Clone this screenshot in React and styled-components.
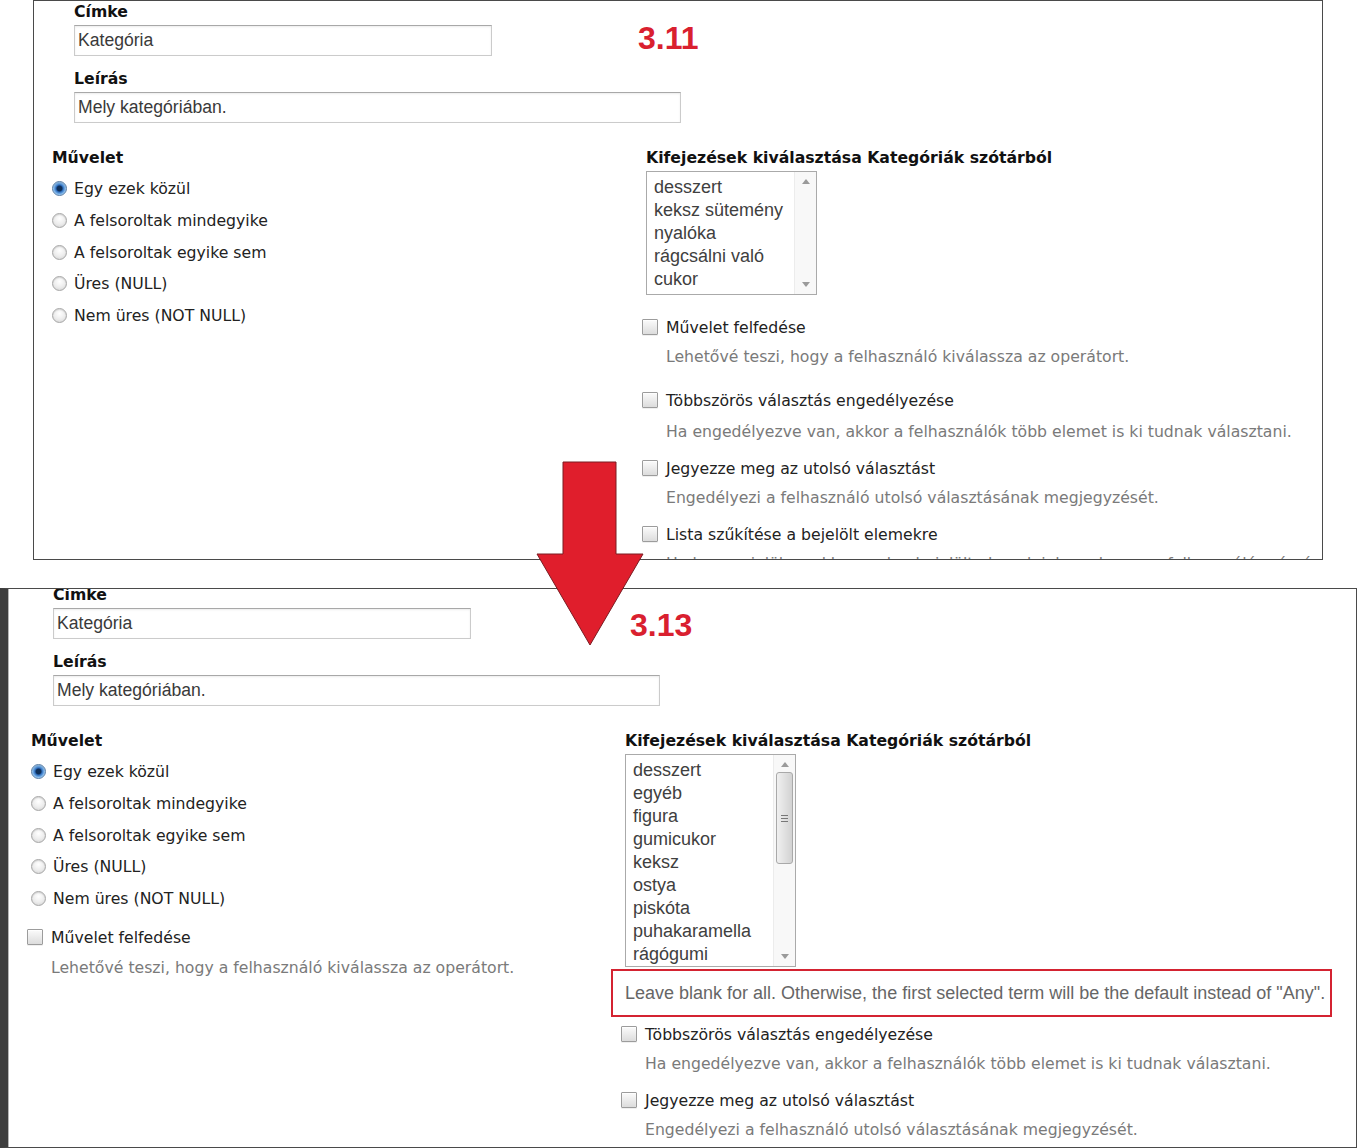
import React from 'react'
import styled, { createGlobalStyle } from 'styled-components'

const GlobalStyle = createGlobalStyle`
  html, body {
    margin: 0;
    padding: 0;
    background: #fff;
  }
  body {
    font-family: "DejaVu Sans", Verdana, sans-serif;
  }
`

const operators = [
    'Egy ezek közül',
    'A felsoroltak mindegyike',
    'A felsoroltak egyike sem',
    'Üres (NULL)',
    'Nem üres (NOT NULL)',
]

const oldTerms = ['desszert', 'keksz sütemény', 'nyalóka', 'rágcsálni való', 'cukor']
const newTerms = ['desszert', 'egyéb', 'figura', 'gumicukor', 'keksz', 'ostya', 'piskóta', 'puhakaramella', 'rágógumi']

const oldOptions = [
    { label: 'Művelet felfedése', hint: 'Lehetővé teszi, hogy a felhasználó kiválassza az operátort.', top: 22, hintTop: 10 },
    { label: 'Többszörös választás engedélyezése', hint: 'Ha engedélyezve van, akkor a felhasználók több elemet is ki tudnak választani.', top: 23, hintTop: 12 },
    { label: 'Jegyezze meg az utolsó választást', hint: 'Engedélyezi a felhasználó utolsó választásának megjegyzését.', top: 16, hintTop: 10 },
    { label: 'Lista szűkítése a bejelölt elemekre', hint: 'Ha be van jelölve, akkor csak a bejelölt elemek jelennek meg a felhasználó számára a listában.', top: 16, hintTop: 10 },
]

const newOptions = [
    { label: 'Többszörös választás engedélyezése', hint: 'Ha engedélyezve van, akkor a felhasználók több elemet is ki tudnak választani.', top: 7, hintTop: 10 },
    { label: 'Jegyezze meg az utolsó választást', hint: 'Engedélyezi a felhasználó utolsó választásának megjegyzését.', top: 16, hintTop: 10 },
]

const CheckOption = ({ label, hint, top, hintTop }) => (
    <>
        <CheckRow $top={top}>
            <Check />
            <span>{label}</span>
        </CheckRow>
        {hint && <Hint $top={hintTop}>{hint}</Hint>}
    </>
)

const TermList = ({ terms, height, thumb }) => (
    <ListBox $height={height}>
        <Options>
            {terms.map(t => <div key={t}>{t}</div>)}
        </Options>
        <ScrollBar>
            <ArrowUp />
            <Track>{thumb && <Thumb><Grip /></Thumb>}</Track>
            <ArrowDown />
        </ScrollBar>
    </ListBox>
)

const TextFields = () => (
    <Fields>
        <FieldLabel>Címke</FieldLabel>
        <TextBox $width={418}>Kategória</TextBox>
        <FieldLabel>Leírás</FieldLabel>
        <TextBox $width={607}>Mely kategóriában.</TextBox>
    </Fields>
)

const OperatorList = () => (
    <>
        <SectionTitle>Művelet</SectionTitle>
        <RadioList>
            {operators.map((op, i) => (
                <RadioRow key={op}>
                    <Radio $checked={i === 0} />
                    <span>{op}</span>
                </RadioRow>
            ))}
        </RadioList>
    </>
)

const App = () => {
    return (
        <Page>
            <GlobalStyle />

            <Panel $offset={33} $width={1290}>
                <Content $pl={18} $mt={1}>
                    <TextFields />
                    <Columns>
                        <div>
                            <OperatorList />
                        </div>
                        <div>
                            <SectionTitle>Kifejezések kiválasztása Kategóriák szótárból</SectionTitle>
                            <TermList terms={oldTerms} height={124} />
                            {oldOptions.map(o => <CheckOption key={o.label} {...o} />)}
                        </div>
                    </Columns>
                </Content>
                <FigureNo $left={604} $top={21}>3.11</FigureNo>
            </Panel>

            <Panel $offset={0} $width={1357} $dark>
                <Content $pl={23} $mt={-4}>
                    <TextFields />
                    <Columns>
                        <div>
                            <OperatorList />
                            <CheckOption label="Művelet felfedése" top={13} hintTop={11}
                                hint="Lehetővé teszi, hogy a felhasználó kiválassza az operátort." />
                        </div>
                        <div>
                            <SectionTitle>Kifejezések kiválasztása Kategóriák szótárból</SectionTitle>
                            <TermList terms={newTerms} height={213} thumb />
                            <Note>Leave blank for all. Otherwise, the first selected term will be the default instead of "Any".</Note>
                            {newOptions.map(o => <CheckOption key={o.label} {...o} />)}
                        </div>
                    </Columns>
                </Content>
                <FigureNo $left={622} $top={20}>3.13</FigureNo>
            </Panel>

            <DownArrow width="109" height="186" viewBox="0 0 109 186">
                <polygon points="27,1 80,1 80,93 107,93 54,184 1,93 27,93"
                    fill="#e01e2c" stroke="#7a1c22" strokeWidth="1" />
            </DownArrow>
        </Page>
    )
}

export default App;

const Page = styled.div`
    position: relative;
    width: 1357px;
    height: 1148px;
    overflow: hidden;
    display: flex;
    flex-direction: column;
    gap: 28px;
`

const Panel = styled.div`
    position: relative;
    box-sizing: border-box;
    height: 560px;
    width: ${p => p.$width}px;
    margin-left: ${p => p.$offset}px;
    border: 1px solid #4a4a4a;
    border-left: ${p => p.$dark ? '8px solid #3d3d3d' : '1px solid #4a4a4a'};
    box-shadow: ${p => p.$dark ? 'inset 1px 0 0 #b5b5b5' : 'none'};
    background: #fff;
    overflow: hidden;
`

const Content = styled.div`
    padding-left: ${p => p.$pl}px;
    margin-top: ${p => p.$mt}px;
`

const Fields = styled.div`
    padding-left: 22px;
`

const FieldLabel = styled.div`
    font-size: 15.7px;
    font-weight: bold;
    line-height: 20px;
    color: #111;
`

const TextBox = styled.div`
    box-sizing: border-box;
    width: ${p => p.$width}px;
    height: 31px;
    margin: 3px 0 13px;
    padding-left: 3px;
    display: flex;
    align-items: center;
    border: 1px solid #cbcbcb;
    border-top-color: #a8a8a8;
    box-shadow: inset 0 1px 2px rgba(0, 0, 0, 0.08);
    font-family: "Liberation Sans", Arial, sans-serif;
    font-size: 17.6px;
    color: #3a3a3a;
`

const Columns = styled.div`
    display: grid;
    grid-template-columns: 594px 1fr;
    margin-top: 25px;
`

const SectionTitle = styled(FieldLabel)`
    white-space: nowrap;
`

const RadioList = styled.div`
    margin-top: 5px;
`

const RadioRow = styled.div`
    height: 31.7px;
    display: flex;
    align-items: center;
    gap: 7px;
    font-size: 15.7px;
    color: #222;
`

const Radio = styled.span`
    box-sizing: border-box;
    width: 15px;
    height: 15px;
    border-radius: 50%;
    border: 1px solid ${p => p.$checked ? '#557aa3' : '#a6a6a6'};
    background: ${p => p.$checked
        ? 'radial-gradient(circle at 50% 50%, #0f2f58 0 2.5px, #2d6cbc 3.5px, #78b1e8 5.5px, #c2e0fa 7px)'
        : 'radial-gradient(circle at 50% 35%, #ffffff 0, #ececec 55%, #cdcdcd 100%)'};
    box-shadow: inset 0 1px 1px rgba(0, 0, 0, 0.12);
`

const CheckRow = styled.div`
    height: 20px;
    margin: ${p => p.$top}px 0 0 -4px;
    display: flex;
    align-items: center;
    gap: 8px;
    font-size: 15.7px;
    color: #222;
    white-space: nowrap;
`

const Check = styled.span`
    box-sizing: border-box;
    flex: none;
    width: 16px;
    height: 16px;
    border: 1px solid #9c9c9c;
    border-radius: 1px;
    background: linear-gradient(#fbfbfb, #dcdcdc);
    box-shadow: inset 0 1px 1px rgba(255, 255, 255, 0.9), 0 1px 0 rgba(0, 0, 0, 0.06);
`

const Hint = styled.div`
    margin-top: ${p => p.$top}px;
    padding-left: 20px;
    line-height: 20px;
    font-size: 15.7px;
    color: #7a7a7a;
    white-space: nowrap;
`

const ListBox = styled.div`
    box-sizing: border-box;
    width: 171px;
    height: ${p => p.$height}px;
    margin-top: 3px;
    display: flex;
    border: 1px solid #aaa;
    overflow: hidden;
`

const Options = styled.div`
    flex: 1;
    padding: 4px 0 0 7px;
    font-family: "Liberation Sans", Arial, sans-serif;
    font-size: 18px;
    line-height: 23px;
    color: #404040;
    white-space: nowrap;
    overflow: hidden;
`

const ScrollBar = styled.div`
    width: 21px;
    display: flex;
    flex-direction: column;
    align-items: center;
    background: #f8f8f8;
    border-left: 1px solid #ececec;
`

const ArrowUp = styled.span`
    margin: 7px 0 5px;
    border-left: 4px solid transparent;
    border-right: 4px solid transparent;
    border-bottom: 5px solid #9a9a9a;
`

const ArrowDown = styled.span`
    margin: 5px 0 7px;
    border-left: 4px solid transparent;
    border-right: 4px solid transparent;
    border-top: 5px solid #9a9a9a;
`

const Track = styled.div`
    flex: 1;
    align-self: stretch;
    padding: 0 2px;
`

const Thumb = styled.div`
    box-sizing: border-box;
    height: 92px;
    border: 1px solid #a9a9a9;
    border-radius: 3px;
    background: linear-gradient(to right, #f0f0f0, #d2d2d2);
    display: flex;
    align-items: center;
    justify-content: center;
`

const Grip = styled.span`
    width: 7px;
    height: 5px;
    border-top: 1px solid #777;
    border-bottom: 1px solid #777;
    background: linear-gradient(#777, #777) center / 100% 1px no-repeat;
`

const Note = styled.div`
    box-sizing: border-box;
    width: 721px;
    height: 48px;
    margin: 2px 0 0 -14px;
    padding-left: 12px;
    display: flex;
    align-items: center;
    border: 2px solid #d42331;
    font-family: "Liberation Sans", Arial, sans-serif;
    font-size: 18px;
    color: #666;
    white-space: nowrap;
`

const FigureNo = styled.div`
    position: absolute;
    left: ${p => p.$left}px;
    top: ${p => p.$top}px;
    font-family: "Liberation Sans", Arial, sans-serif;
    font-weight: bold;
    font-size: 32px;
    line-height: 32px;
    color: #d9202f;
`

const DownArrow = styled.svg`
    position: absolute;
    left: 536px;
    top: 461px;
`
